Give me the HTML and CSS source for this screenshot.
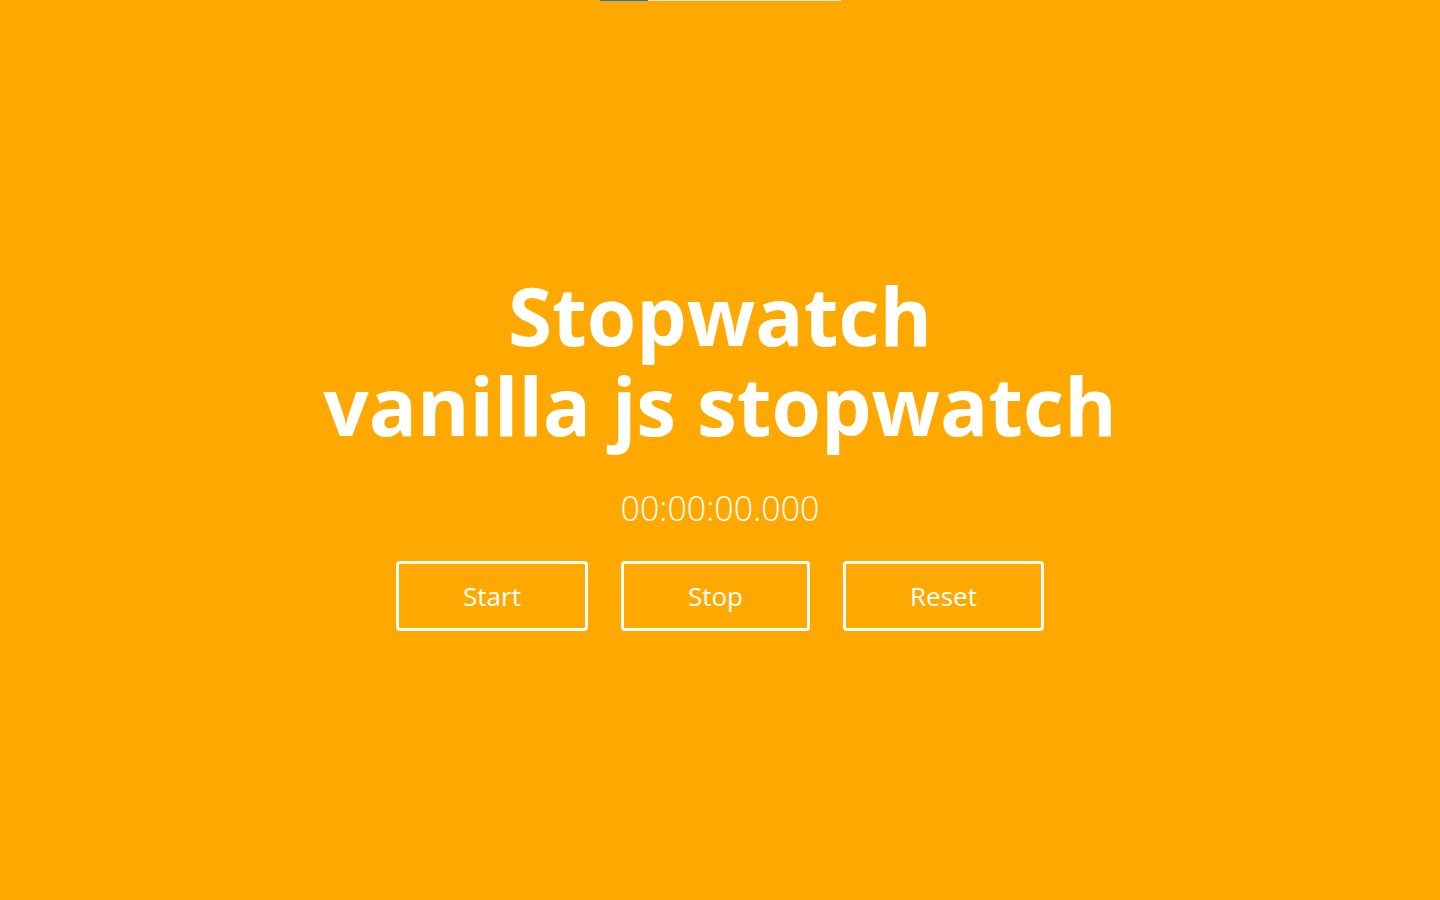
FILE: index.html
```html
<!DOCTYPE html>
<html lang="en">
<head>
<meta charset="utf-8">
<title>Stopwatch</title>
<link rel="stylesheet" href="styles.css">
</head>
<body>
<div class="topbar"><div class="progress"><div class="progress-value"></div></div></div>
<main class="app">
  <h1 class="title"><span class="title-line">Stopwatch</span><span class="title-line">vanilla js stopwatch</span></h1>
  <div class="time">00:00:00.000</div>
  <div class="controls">
    <button class="btn">Start</button>
    <button class="btn">Stop</button>
    <button class="btn">Reset</button>
  </div>
</main>
</body>
</html>
```
FILE: styles.css
```css
html, body {
  margin: 0;
  padding: 0;
  height: 100%;
}
body {
  background: #ffa800;
  color: #fff;
  font-family: "Open Sans", "Noto Sans", sans-serif;
  overflow: hidden;
  display: flex;
  flex-direction: column;
}
.topbar {
  height: 1px;
  display: flex;
  justify-content: center;
}
.progress {
  width: 241px;
  height: 1px;
  background: #e6e6e6;
  margin-right: -1px;
}
.progress-value {
  width: 48px;
  height: 1px;
  background: #0a78d7;
}
.app {
  flex: 1;
  display: flex;
  flex-direction: column;
  align-items: center;
  justify-content: center;
  padding-bottom: 1px;
}
.title {
  margin: 0;
  font-size: 80px;
  font-weight: 700;
  line-height: 90px;
  text-align: center;
  display: flex;
  flex-direction: column;
  align-items: center;
}
.title-line {
  display: block;
  height: 90px;
}
.time {
  margin-top: 36px;
  font-size: 34px;
  font-weight: 300;
  line-height: 44px;
}
.controls {
  margin-top: 31px;
  display: flex;
  gap: 33px;
}
.btn {
  background: transparent;
  border: 3px solid #fff;
  border-radius: 4px;
  color: #fff;
  font-family: inherit;
  font-size: 26px;
  height: 70px;
  padding: 0 64px;
  cursor: pointer;
}
```
